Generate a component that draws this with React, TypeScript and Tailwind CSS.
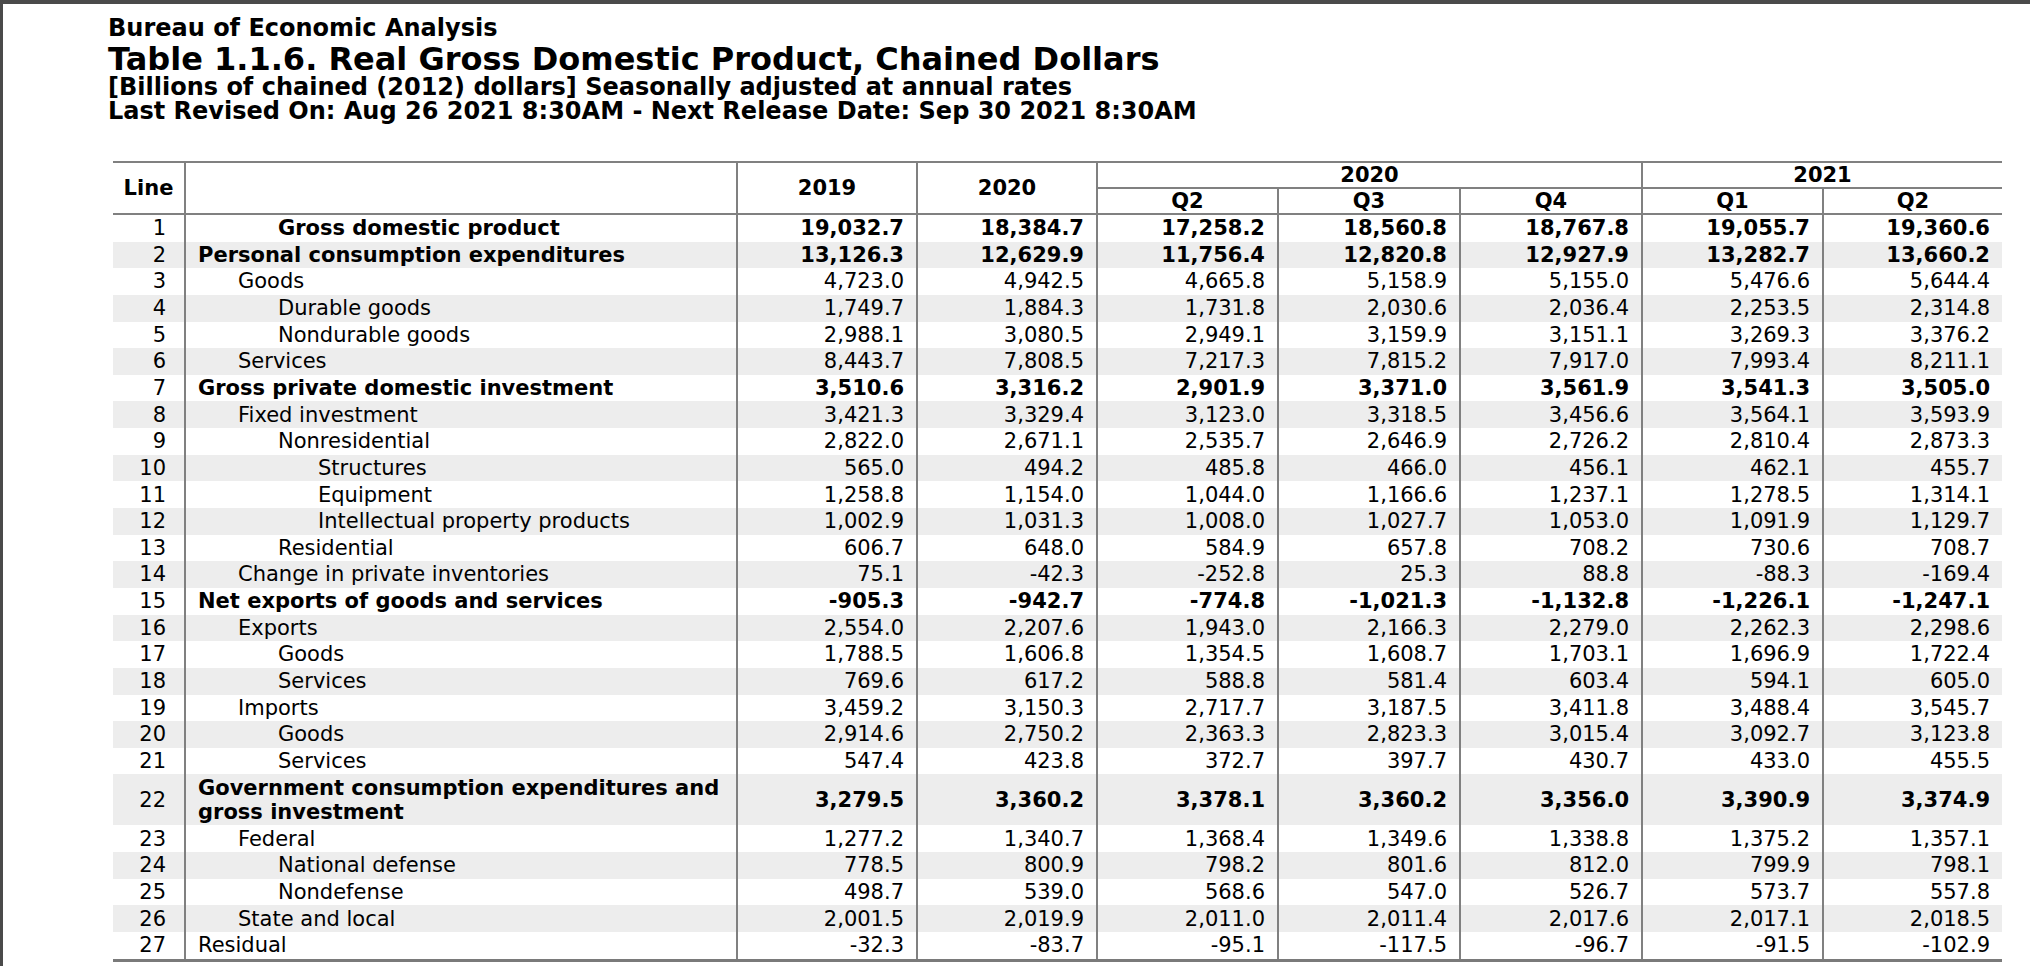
import React from "react";

type Row = { n: number; label: React.ReactNode; lvl: number; bold?: boolean; v: string[] };

const rows: Row[] = [
  { n: 1, label: "Gross domestic product", lvl: 2, bold: true, v: ["19,032.7", "18,384.7", "17,258.2", "18,560.8", "18,767.8", "19,055.7", "19,360.6"] },
  { n: 2, label: "Personal consumption expenditures", lvl: 0, bold: true, v: ["13,126.3", "12,629.9", "11,756.4", "12,820.8", "12,927.9", "13,282.7", "13,660.2"] },
  { n: 3, label: "Goods", lvl: 1, v: ["4,723.0", "4,942.5", "4,665.8", "5,158.9", "5,155.0", "5,476.6", "5,644.4"] },
  { n: 4, label: "Durable goods", lvl: 2, v: ["1,749.7", "1,884.3", "1,731.8", "2,030.6", "2,036.4", "2,253.5", "2,314.8"] },
  { n: 5, label: "Nondurable goods", lvl: 2, v: ["2,988.1", "3,080.5", "2,949.1", "3,159.9", "3,151.1", "3,269.3", "3,376.2"] },
  { n: 6, label: "Services", lvl: 1, v: ["8,443.7", "7,808.5", "7,217.3", "7,815.2", "7,917.0", "7,993.4", "8,211.1"] },
  { n: 7, label: "Gross private domestic investment", lvl: 0, bold: true, v: ["3,510.6", "3,316.2", "2,901.9", "3,371.0", "3,561.9", "3,541.3", "3,505.0"] },
  { n: 8, label: "Fixed investment", lvl: 1, v: ["3,421.3", "3,329.4", "3,123.0", "3,318.5", "3,456.6", "3,564.1", "3,593.9"] },
  { n: 9, label: "Nonresidential", lvl: 2, v: ["2,822.0", "2,671.1", "2,535.7", "2,646.9", "2,726.2", "2,810.4", "2,873.3"] },
  { n: 10, label: "Structures", lvl: 3, v: ["565.0", "494.2", "485.8", "466.0", "456.1", "462.1", "455.7"] },
  { n: 11, label: "Equipment", lvl: 3, v: ["1,258.8", "1,154.0", "1,044.0", "1,166.6", "1,237.1", "1,278.5", "1,314.1"] },
  { n: 12, label: "Intellectual property products", lvl: 3, v: ["1,002.9", "1,031.3", "1,008.0", "1,027.7", "1,053.0", "1,091.9", "1,129.7"] },
  { n: 13, label: "Residential", lvl: 2, v: ["606.7", "648.0", "584.9", "657.8", "708.2", "730.6", "708.7"] },
  { n: 14, label: "Change in private inventories", lvl: 1, v: ["75.1", "-42.3", "-252.8", "25.3", "88.8", "-88.3", "-169.4"] },
  { n: 15, label: "Net exports of goods and services", lvl: 0, bold: true, v: ["-905.3", "-942.7", "-774.8", "-1,021.3", "-1,132.8", "-1,226.1", "-1,247.1"] },
  { n: 16, label: "Exports", lvl: 1, v: ["2,554.0", "2,207.6", "1,943.0", "2,166.3", "2,279.0", "2,262.3", "2,298.6"] },
  { n: 17, label: "Goods", lvl: 2, v: ["1,788.5", "1,606.8", "1,354.5", "1,608.7", "1,703.1", "1,696.9", "1,722.4"] },
  { n: 18, label: "Services", lvl: 2, v: ["769.6", "617.2", "588.8", "581.4", "603.4", "594.1", "605.0"] },
  { n: 19, label: "Imports", lvl: 1, v: ["3,459.2", "3,150.3", "2,717.7", "3,187.5", "3,411.8", "3,488.4", "3,545.7"] },
  { n: 20, label: "Goods", lvl: 2, v: ["2,914.6", "2,750.2", "2,363.3", "2,823.3", "3,015.4", "3,092.7", "3,123.8"] },
  { n: 21, label: "Services", lvl: 2, v: ["547.4", "423.8", "372.7", "397.7", "430.7", "433.0", "455.5"] },
  {
    n: 22,
    label: (
      <>
        Government consumption expenditures and
        <br />
        gross investment
      </>
    ),
    lvl: 0,
    bold: true,
    v: ["3,279.5", "3,360.2", "3,378.1", "3,360.2", "3,356.0", "3,390.9", "3,374.9"],
  },
  { n: 23, label: "Federal", lvl: 1, v: ["1,277.2", "1,340.7", "1,368.4", "1,349.6", "1,338.8", "1,375.2", "1,357.1"] },
  { n: 24, label: "National defense", lvl: 2, v: ["778.5", "800.9", "798.2", "801.6", "812.0", "799.9", "798.1"] },
  { n: 25, label: "Nondefense", lvl: 2, v: ["498.7", "539.0", "568.6", "547.0", "526.7", "573.7", "557.8"] },
  { n: 26, label: "State and local", lvl: 1, v: ["2,001.5", "2,019.9", "2,011.0", "2,011.4", "2,017.6", "2,017.1", "2,018.5"] },
  { n: 27, label: "Residual", lvl: 0, v: ["-32.3", "-83.7", "-95.1", "-117.5", "-96.7", "-91.5", "-102.9"] },
];

const indent = ["pl-[12px]", "pl-[52px]", "pl-[92px]", "pl-[132px]"];

const cols = "grid grid-cols-[71px_552px_180px_180px_181px_182px_182px_181px_180px]";

export default function App() {
  return (
    <div className="min-h-[966px] w-full bg-white border-t-4 border-l-[3px] border-[#4a4a4a] font-['DejaVu_Sans',Verdana,sans-serif] text-black">
      <div className="pl-[105px] pt-[9px] font-bold">
        <div className="text-[24px] leading-[30px]">Bureau of Economic Analysis</div>
        <div className="text-[32px] leading-[33px]">Table 1.1.6. Real Gross Domestic Product, Chained Dollars</div>
        <div className="text-[24px] leading-[23.5px]">[Billions of chained (2012) dollars] Seasonally adjusted at annual rates</div>
        <div className="text-[24px] leading-[23.5px]">Last Revised On: Aug 26 2021 8:30AM - Next Release Date: Sep 30 2021 8:30AM</div>
      </div>

      <div className="ml-[110px] mt-[38px] w-[1889px] text-[21px]">
        <div className={`${cols} grid-rows-[26px_24px] border-t-2 border-b-2 border-[#808080] font-bold leading-[24px]`}>
          <div className="row-span-2 flex items-center justify-center">Line</div>
          <div className="row-span-2 border-l-2 border-[#808080]"></div>
          <div className="row-span-2 border-l-2 border-[#808080] flex items-center justify-center">2019</div>
          <div className="row-span-2 border-l-2 border-[#808080] flex items-center justify-center">2020</div>
          <div className="col-span-3 border-l-2 border-b-2 border-[#808080] flex items-center justify-center">2020</div>
          <div className="col-span-2 border-l-2 border-b-2 border-[#808080] flex items-center justify-center">2021</div>
          <div className="border-l-2 border-[#808080] flex items-center justify-center">Q2</div>
          <div className="border-l-2 border-[#808080] flex items-center justify-center">Q3</div>
          <div className="border-l-2 border-[#808080] flex items-center justify-center">Q4</div>
          <div className="border-l-2 border-[#808080] flex items-center justify-center">Q1</div>
          <div className="border-l-2 border-[#808080] flex items-center justify-center">Q2</div>
        </div>

        <div className="border-b-[3px] border-[#7a7a7a]">
          {rows.map((r) => (
            <div
              key={r.n}
              className={`${cols} leading-[24.33px] ${r.n % 2 === 0 ? "bg-[#ededed]" : "bg-white"} ${r.bold ? "font-bold" : "font-normal"}`}
            >
              <div className="flex items-center justify-end pr-[18px] py-[1.17px] font-normal">{r.n}</div>
              <div className={`border-l-2 border-[#808080] py-[1.17px] whitespace-nowrap flex items-center ${indent[r.lvl]}`}>
                <span>{r.label}</span>
              </div>
              {r.v.map((x, i) => (
                <div key={i} className="border-l-2 border-[#808080] flex items-center justify-end pr-[12px] py-[1.17px]">
                  {x}
                </div>
              ))}
            </div>
          ))}
        </div>
      </div>
    </div>
  );
}
